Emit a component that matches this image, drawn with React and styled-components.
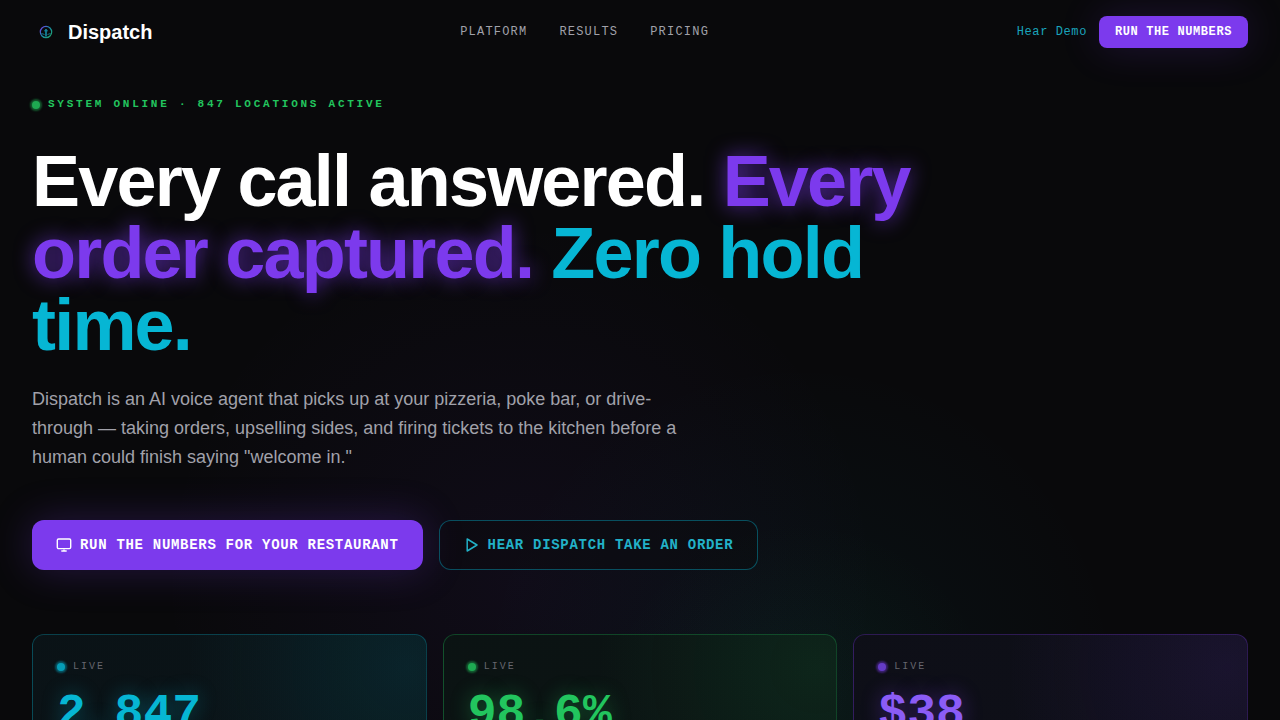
import React from "react";
import styled, { createGlobalStyle } from "styled-components";

const mono = '"Liberation Mono", monospace';
const sans = '"Liberation Sans", Arial, sans-serif';

const GlobalStyle = createGlobalStyle`
  *, *::before, *::after { box-sizing: border-box; }
  body {
    margin: 0;
    background: #09090b;
    color: #ffffff;
    font-family: ${sans};
  }
  h1, p, ul { margin: 0; padding: 0; }
  a { color: inherit; text-decoration: none; }
`;

const Page = styled.div`
  min-height: 100vh;
  overflow: hidden;
  background:
    radial-gradient(circle 360px at 520px 580px, rgba(124, 58, 237, 0.06), transparent),
    radial-gradient(circle 320px at 800px 680px, rgba(6, 182, 212, 0.05), transparent),
    radial-gradient(circle 200px at 800px 720px, rgba(34, 197, 94, 0.05), transparent),
    #09090b;
`;

const Header = styled.header`
  display: flex;
  justify-content: space-between;
  align-items: center;
  height: 64px;
  padding: 0 32px;
`;

const Brand = styled.a`
  display: flex;
  align-items: center;
  gap: 8px;
  font-size: 20px;
  line-height: 28px;
  font-weight: 700;
`;

const Nav = styled.nav`
  display: flex;
  gap: 32px;
`;

const NavLink = styled.a`
  font-family: ${mono};
  font-size: 12px;
  line-height: 16px;
  letter-spacing: 0.1em;
  color: #a1a1aa;
`;

const HeaderActions = styled.div`
  display: flex;
  align-items: center;
  justify-content: flex-end;
  gap: 12px;
`;

const DemoLink = styled.a`
  font-family: ${mono};
  font-size: 12px;
  line-height: 16px;
  letter-spacing: 0.05em;
  color: #19a5bc;
`;

const Button = styled.button`
  display: inline-flex;
  align-items: center;
  justify-content: center;
  gap: 8px;
  margin: 0;
  padding: ${(p) => (p.$large ? "14px 24px" : "8px 16px")};
  border: ${(p) => (p.$outline ? "1px solid rgba(6, 182, 212, 0.4)" : "0")};
  border-radius: ${(p) => (p.$large ? "12px" : "8px")};
  background: ${(p) => (p.$outline ? "rgba(9, 9, 11, 0.3)" : "#7c3aed")};
  color: ${(p) => (p.$outline ? "#22b1c8" : "#ffffff")};
  box-shadow: ${(p) => (p.$outline ? "none" : p.$large ? "0 0 40px rgba(124, 58, 237, 0.25)" : "0 0 40px rgba(124, 58, 237, 0.2)")};
  font-family: ${mono};
  font-size: ${(p) => (p.$large ? "14px" : "12px")};
  line-height: ${(p) => (p.$large ? "20px" : "16px")};
  font-weight: 700;
  letter-spacing: 0.05em;
  cursor: pointer;
`;

const Hero = styled.main`
  padding: 32px 32px 48px;
`;

const Status = styled.p`
  display: flex;
  align-items: center;
  gap: 8px;
  font-family: ${mono};
  font-size: 11px;
  line-height: 17px;
  font-weight: 700;
  letter-spacing: 0.25em;
  color: #22c55e;
`;

const Dot = styled.span`
  flex: none;
  width: 8px;
  height: 8px;
  border-radius: 50%;
  background: ${(p) => p.$color};
  opacity: 0.85;
  box-shadow: 0 0 2px 2px rgba(${(p) => p.$rgb}, 0.5);
`;

const Title = styled.h1`
  max-width: 896px;
  margin-top: 32px;
  font-size: 72px;
  line-height: 72px;
  font-weight: 700;
  letter-spacing: -0.025em;
`;

const Accent = styled.span`
  color: ${(p) => p.$color};
  text-shadow: ${(p) => (p.$glow ? "0 0 20px rgba(124, 58, 237, 0.7)" : "none")};
`;

const Lead = styled.p`
  max-width: 672px;
  margin-top: 24px;
  font-size: 18px;
  line-height: 29px;
  color: #a1a1aa;
`;

const Actions = styled.div`
  display: flex;
  flex-wrap: wrap;
  gap: 16px;
  margin-top: 48px;
`;

const Stats = styled.section`
  display: grid;
  grid-template-columns: repeat(3, 1fr);
  gap: 16px;
  margin-top: 64px;
`;

const Card = styled.article`
  padding: 24px;
  border: 1px solid rgba(${(p) => p.$rgb}, 0.28);
  border-radius: 12px;
  background:
    radial-gradient(circle 220px at 95% 32px, rgba(${(p) => p.$rgb}, 0.1), transparent),
    linear-gradient(rgba(${(p) => p.$rgb}, 0.03), rgba(${(p) => p.$rgb}, 0.03)),
    #0a0d11;
`;

const Live = styled.div`
  display: flex;
  align-items: center;
  gap: 8px;
  font-family: ${mono};
  font-size: 10px;
  line-height: 15px;
  letter-spacing: 0.2em;
  color: #66666e;
`;

const Figure = styled.p`
  margin-top: 16px;
  font-family: ${mono};
  font-size: 48px;
  line-height: 48px;
  font-weight: 700;
  color: ${(p) => p.$color};
  text-shadow: 0 0 20px rgba(${(p) => p.$rgb}, 0.4);
`;

const LogoMark = () => (
  <svg width="28" height="28" viewBox="0 0 28 28" fill="none" aria-hidden="true">
    <defs>
      <linearGradient id="mark" x1="8" y1="9" x2="20" y2="19" gradientUnits="userSpaceOnUse">
        <stop stopColor="#7c3aed" />
        <stop offset="0.5" stopColor="#168fa8" />
        <stop offset="1" stopColor="#22a565" />
      </linearGradient>
    </defs>
    <circle cx="14" cy="14" r="5.7" stroke="url(#mark)" strokeWidth="1.2" />
    <path d="M14 11v7.5" stroke="#168fa8" strokeWidth="1.6" />
    <path d="M9.5 15.5l3 1M18.5 15.5l-3 1M12 12.8h4" stroke="#168fa8" strokeOpacity="0.8" />
  </svg>
);

const MonitorIcon = () => (
  <svg width="16" height="16" viewBox="0 0 16 16" fill="none" stroke="currentColor" strokeWidth="1.4" strokeLinecap="round" strokeLinejoin="round" aria-hidden="true">
    <rect x="1.3" y="2" width="13.4" height="9.6" rx="1.3" />
    <path d="M5.8 14h4.4M8 13v1" />
  </svg>
);

const PlayIcon = () => (
  <svg width="16" height="16" viewBox="0 0 16 16" fill="none" stroke="currentColor" strokeWidth="1.5" strokeLinejoin="round" aria-hidden="true">
    <path d="M3.2 2v12L13 8z" />
  </svg>
);

const stats = [
  { value: "2,847", color: "#06b6d4", rgb: "6, 182, 212" },
  { value: "98.6%", color: "#22c55e", rgb: "34, 197, 94" },
  { value: "$38", color: "#8b5cf6", dot: "#7443e6", rgb: "124, 58, 237" },
];

export default function App() {
  return (
    <>
      <GlobalStyle />
      <Page>
        <Header>
          <Brand href="#top">
            <LogoMark />
            Dispatch
          </Brand>
          <Nav aria-label="Main">
            <NavLink href="#platform">PLATFORM</NavLink>
            <NavLink href="#results">RESULTS</NavLink>
            <NavLink href="#pricing">PRICING</NavLink>
          </Nav>
          <HeaderActions>
            <DemoLink href="#demo">Hear Demo</DemoLink>
            <Button type="button">RUN THE NUMBERS</Button>
          </HeaderActions>
        </Header>
        <Hero id="top">
          <Status>
            <Dot $color="#22c55e" $rgb="34, 197, 94" />
            SYSTEM ONLINE · 847 LOCATIONS ACTIVE
          </Status>
          <Title>
            Every call answered. <Accent $color="#7c3aed" $glow>Every order captured.</Accent>{" "}
            <Accent $color="#06b6d4">Zero hold time.</Accent>
          </Title>
          <Lead>
            Dispatch is an AI voice agent that picks up at your pizzeria, poke bar, or drive-through — taking
            orders, upselling sides, and firing tickets to the kitchen before a human could finish saying
            "welcome in."
          </Lead>
          <Actions>
            <Button type="button" $large>
              <MonitorIcon />
              RUN THE NUMBERS FOR YOUR RESTAURANT
            </Button>
            <Button type="button" $large $outline>
              <PlayIcon />
              HEAR DISPATCH TAKE AN ORDER
            </Button>
          </Actions>
          <Stats>
            {stats.map((s) => (
              <Card key={s.value} $rgb={s.rgb}>
                <Live>
                  <Dot $color={s.dot || s.color} $rgb={s.rgb} />
                  LIVE
                </Live>
                <Figure $color={s.color} $rgb={s.rgb}>{s.value}</Figure>
              </Card>
            ))}
          </Stats>
        </Hero>
      </Page>
    </>
  );
}
